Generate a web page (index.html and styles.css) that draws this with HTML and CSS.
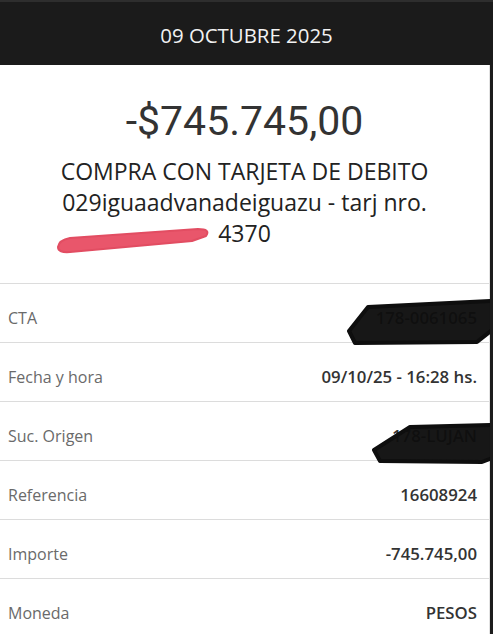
FILE: index.html
```html
<!DOCTYPE html>
<html lang="es">
<head>
<meta charset="utf-8">
<title>Movimiento</title>
<link rel="stylesheet" href="styles.css">
</head>
<body>
<div class="page">
  <header class="topbar">09 OCTUBRE 2025</header>
  <section class="summary">
    <div class="amount">-$745.745,00</div>
    <div class="desc">
      <div>COMPRA CON TARJETA DE DEBITO</div>
      <div>029iguaadvanadeiguazu - tarj nro.</div>
      <div>4370</div>
    </div>
  </section>
  <ul class="details">
    <li class="row"><span class="label">CTA</span><span class="value">178-0061065</span></li>
    <li class="row"><span class="label">Fecha y hora</span><span class="value">09/10/25 - 16:28 hs.</span></li>
    <li class="row"><span class="label">Suc. Origen</span><span class="value">178-LUJAN</span></li>
    <li class="row"><span class="label">Referencia</span><span class="value">16608924</span></li>
    <li class="row"><span class="label">Importe</span><span class="value">-745.745,00</span></li>
    <li class="row"><span class="label">Moneda</span><span class="value">PESOS</span></li>
  </ul>
  <svg class="marks" viewBox="0 0 490 634" width="490" height="634" aria-hidden="true">
    <path class="red" d="M58,247 Q59,240 70,238 L198,229 Q211,229 206,236 L192,241 L70,252 Q58,253 58,247 Z"/>
    <path class="black" d="M368,307 L492,301 L492,330 L477,342 L355,343 L349,331 Z"/>
    <path class="black" d="M410,427 L492,425 L492,458 L482,462 L380,461 L374,450 Z"/>
  </svg>
</div>
</body>
</html>
```

FILE: styles.css
```css
html, body {
  margin: 0;
  padding: 0;
}
body {
  background: #1c1c1c;
  font-family: "Open Sans", "Liberation Sans", sans-serif;
  width: 493px;
  height: 634px;
  overflow: hidden;
}
.page {
  position: relative;
  width: 490px;
  height: 634px;
  background: #ffffff;
}
.topbar {
  height: 65px;
  box-sizing: border-box;
  padding-top: 3px;
  background: #1b1b1b;
  border-top: 2px solid #2e2e2e;
  color: #f2f2f2;
  font-size: 20.4px;
  display: flex;
  align-items: center;
  justify-content: center;
  margin-right: -3px;
}
.summary {
  height: 218px;
  box-sizing: border-box;
  padding-top: 32px;
  text-align: center;
  border-right: 1px solid #e2e2e2;
}
.amount {
  font-family: Roboto, "Liberation Sans", sans-serif;
  font-size: 41px;
  line-height: 48px;
  color: #333333;
}
.desc {
  margin-top: 11px;
  font-size: 23px;
  line-height: 31px;
  color: #222222;
}
.details {
  list-style: none;
  margin: 0;
  padding: 0;
  border-right: 1px solid #e2e2e2;
}
.row {
  height: 59px;
  box-sizing: border-box;
  border-top: 1px solid #dcdcdc;
  padding: 23px 12px 0 8px;
  display: flex;
  justify-content: space-between;
  align-items: baseline;
  font-size: 16px;
  line-height: 22px;
}
.label {
  color: #6a6a6a;
}
.value {
  color: #333333;
  font-weight: 600;
  font-size: 16.8px;
}
.marks {
  position: absolute;
  left: 0;
  top: 0;
  pointer-events: none;
}
.red {
  fill: #e9566b;
  stroke: #e24d62;
  stroke-width: 2;
  stroke-linejoin: round;
}
.black {
  fill: #0e0e0e;
  fill-opacity: 0.96;
  stroke: #0e0e0e;
  stroke-width: 4;
  stroke-linejoin: round;
}
```
